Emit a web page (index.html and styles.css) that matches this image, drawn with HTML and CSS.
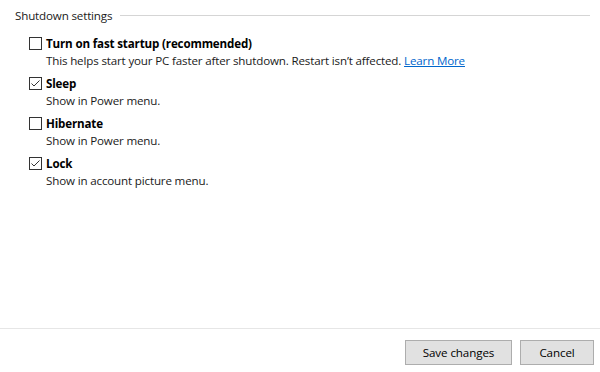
FILE: index.html
```html
<!DOCTYPE html>
<html>
<head>
<meta charset="utf-8">
<link rel="stylesheet" href="styles.css">
</head>
<body>
<div class="page">
  <div class="content">
    <div class="group-title">
      <span class="group-label">Shutdown settings</span>
      <span class="group-rule"></span>
    </div>
    <div class="options">
      <div class="option">
        <div class="check-row"><span class="box"></span><span class="name">Turn on fast startup (recommended)</span></div>
        <div class="desc">This helps start your PC faster after shutdown. Restart isn’t affected. <a class="link" href="#">Learn More</a></div>
      </div>
      <div class="option">
        <div class="check-row"><span class="box checked"><svg viewBox="0 0 13 13" width="13" height="13"><path d="M2.5 6.5 L5 9 L10.5 3.5" fill="none" stroke="#333" stroke-width="1"/></svg></span><span class="name">Sleep</span></div>
        <div class="desc">Show in Power menu.</div>
      </div>
      <div class="option">
        <div class="check-row"><span class="box"></span><span class="name">Hibernate</span></div>
        <div class="desc">Show in Power menu.</div>
      </div>
      <div class="option">
        <div class="check-row"><span class="box checked"><svg viewBox="0 0 13 13" width="13" height="13"><path d="M2.5 6.5 L5 9 L10.5 3.5" fill="none" stroke="#333" stroke-width="1"/></svg></span><span class="name">Lock</span></div>
        <div class="desc">Show in account picture menu.</div>
      </div>
    </div>
  </div>
  <div class="footer">
    <button class="btn btn-save">Save changes</button>
    <button class="btn btn-cancel">Cancel</button>
  </div>
</div>
</body>
</html>
```

FILE: styles.css
```css
html, body {
  margin: 0;
  padding: 0;
  background: #ffffff;
}
body {
  font-family: "Open Sans", "Noto Sans", sans-serif;
  font-size: 11.6px;
  letter-spacing: -0.16px;
  color: #000;
}
.page {
  width: 600px;
  height: 372px;
  display: flex;
  flex-direction: column;
}
.content {
  flex: 1;
  padding: 6px 10px 0 15px;
}
.group-title {
  display: flex;
  align-items: center;
  height: 18px;
}
.group-label {
  color: #1a1a1a;
  margin-right: 8px;
  white-space: nowrap;
}
.group-rule {
  flex: 1;
  height: 1px;
  background: #d5d5d5;
}
.options {
  padding-left: 14px;
  padding-top: 12px;
  display: flex;
  flex-direction: column;
  gap: 7px;
}
.option {
  display: flex;
  flex-direction: column;
}
.check-row {
  display: flex;
  align-items: center;
  height: 14px;
}
.box {
  width: 11px;
  height: 11px;
  border: 1px solid #333;
  background: #fff;
  margin-right: 4px;
  position: relative;
  flex: none;
}
.box svg {
  position: absolute;
  left: -1px;
  top: -1px;
}
.name {
  font-weight: 700;
}
.desc {
  padding-left: 17px;
  margin-top: 3px;
  line-height: 16px;
  color: #1a1a1a;
}
.link {
  color: #0066cc;
  text-decoration: underline;
}
.footer {
  border-top: 1px solid #e6e6e6;
  height: 44px;
  display: flex;
  justify-content: flex-end;
  align-items: flex-start;
  padding: 11px 6px 0 0;
  gap: 8px;
  box-sizing: border-box;
}
.btn {
  font-family: inherit;
  font-size: 11.6px;
  letter-spacing: -0.1px;
  background: #e1e1e1;
  border: 1px solid #adadad;
  height: 25px;
  color: #000;
  padding: 0;
}
.btn-save { width: 107px; }
.btn-cancel { width: 74px; }
```
